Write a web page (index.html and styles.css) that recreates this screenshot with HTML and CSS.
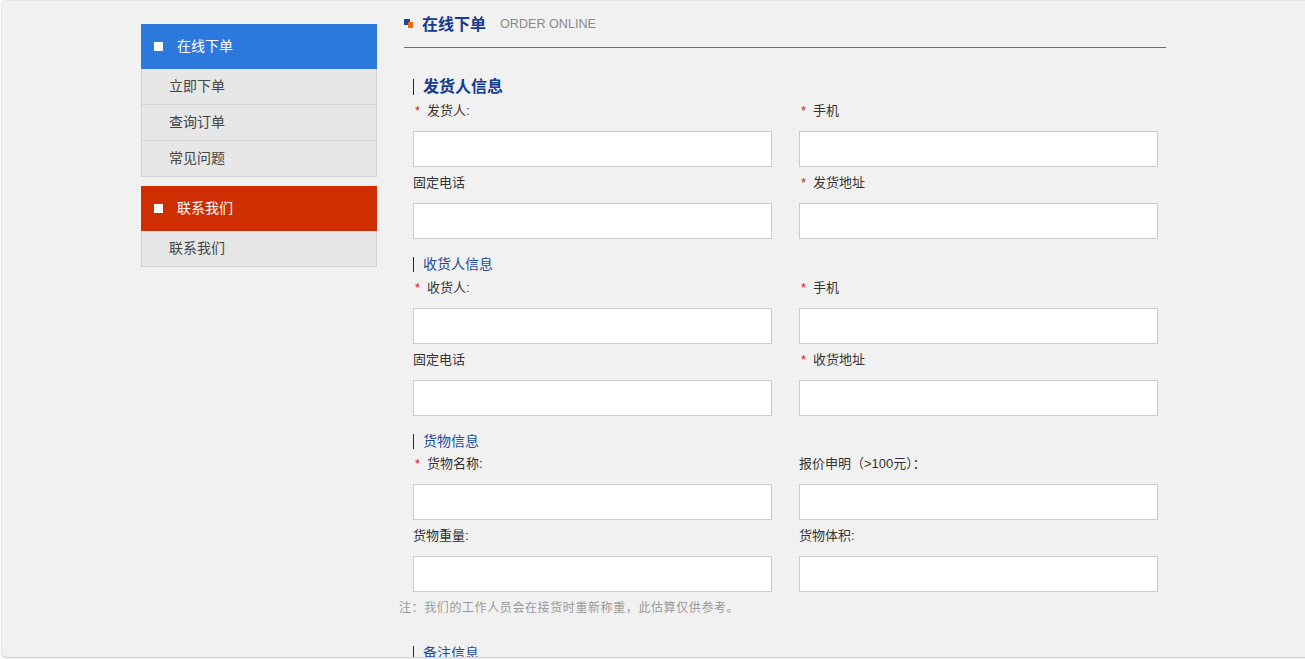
FILE: index.html
```html
<!DOCTYPE html>
<html lang="zh-CN">
<head>
<meta charset="utf-8">
<title>在线下单</title>
<link rel="stylesheet" href="styles.css">
</head>
<body>
<div class="frame">
  <div class="layout">
    <aside class="sidebar">
      <div class="side-block">
        <div class="side-head blue"><span class="sq"></span>在线下单</div>
        <ul class="side-list">
          <li>立即下单</li>
          <li>查询订单</li>
          <li>常见问题</li>
        </ul>
      </div>
      <div class="side-block">
        <div class="side-head red"><span class="sq"></span>联系我们</div>
        <ul class="side-list">
          <li>联系我们</li>
        </ul>
      </div>
    </aside>
    <main class="content">
      <div class="page-head">
        <span class="logo-sq"><i class="b"></i><i class="o"></i></span>
        <h1 class="page-title">在线下单</h1>
        <span class="page-sub">ORDER ONLINE</span>
      </div>
      <form class="form">
        <h2 class="sec-title big">发货人信息</h2>
        <div class="grid">
          <div class="field"><label><span class="req">*</span>发货人:</label><input type="text"></div>
          <div class="field"><label><span class="req">*</span>手机</label><input type="text"></div>
          <div class="field"><label>固定电话</label><input type="text"></div>
          <div class="field"><label><span class="req">*</span>发货地址</label><input type="text"></div>
        </div>
        <h2 class="sec-title">收货人信息</h2>
        <div class="grid">
          <div class="field"><label><span class="req">*</span>收货人:</label><input type="text"></div>
          <div class="field"><label><span class="req">*</span>手机</label><input type="text"></div>
          <div class="field"><label>固定电话</label><input type="text"></div>
          <div class="field"><label><span class="req">*</span>收货地址</label><input type="text"></div>
        </div>
        <h2 class="sec-title">货物信息</h2>
        <div class="grid tight">
          <div class="field"><label><span class="req">*</span>货物名称:</label><input type="text"></div>
          <div class="field"><label>报价申明（&gt;100元）：</label><input type="text"></div>
          <div class="field"><label>货物重量:</label><input type="text"></div>
          <div class="field"><label>货物体积:</label><input type="text"></div>
        </div>
        <p class="note">注：我们的工作人员会在接货时重新称重，此估算仅供参考。</p>
        <h2 class="sec-title last">备注信息</h2>
      </form>
    </main>
  </div>
</div>
</body>
</html>
```
FILE: styles.css
```css
* { box-sizing: border-box; }
html, body { margin: 0; padding: 0; }
body {
  background: #fbfbfb;
  width: 1305px;
  height: 659px;
  overflow: hidden;
  font-family: "Liberation Sans", Arial, "Noto Sans CJK SC", sans-serif;
  color: #333;
}
.frame {
  margin-left: 1px;
  width: 1330px;
  height: 658px;
  background: #f1f1f1;
  border: 1px solid #e4e4e4;
  border-bottom-color: #d4d4d4;
  border-radius: 6px;
  box-shadow: 0 1px 1px rgba(0,0,0,0.06);
  overflow: hidden;
}
.layout {
  display: flex;
  padding-left: 139px;
  gap: 27px;
}
.sidebar {
  width: 236px;
  padding-top: 23px;
  display: flex;
  flex-direction: column;
  gap: 9px;
}
.side-head {
  height: 45px;
  display: flex;
  align-items: center;
  padding-left: 13px;
  padding-bottom: 3px;
  color: #fff;
  font-size: 14px;
}
.side-head.blue { background: #2c79dd; }
.side-head.red { background: #cf2e02; }
.side-head .sq {
  width: 9px;
  height: 9px;
  background: #fff;
  margin-right: 14px;
  margin-top: 3px;
}
.side-list {
  list-style: none;
  margin: 0;
  padding: 0;
  border: 1px solid #d4d4d4;
  border-top: 0;
  background: #e7e7e7;
}
.side-list li {
  height: 36px;
  line-height: 35px;
  padding-left: 27px;
  font-size: 14px;
  color: #444;
  border-bottom: 1px solid #d4d4d4;
}
.side-list li:last-child { border-bottom: 0; height: 35px; }
.content {
  width: 762px;
}
.page-head {
  height: 47px;
  padding-bottom: 3px;
  border-bottom: 1px solid #2a7fc2;
  display: flex;
  align-items: center;
}
.logo-sq {
  position: relative;
  width: 10px;
  height: 10px;
  margin-right: 8px;
  margin-top: 3px;
}
.logo-sq i { position: absolute; display: block; }
.logo-sq .b { left: 0; top: 0; width: 6px; height: 6px; background: #1b46a0; }
.logo-sq .o { left: 4px; top: 3px; width: 5px; height: 6px; background: #f06a00; }
.page-title {
  margin: 0 14px 0 0;
  font-size: 16px;
  font-weight: bold;
  color: #163b8f;
}
.page-sub {
  font-size: 12.6px;
  color: #8a8a8a;
  margin-top: 3px;
}
.form {
  padding-left: 9px;
}
.sec-title {
  margin: 18px 0 0 0;
  border-left: 1px solid #1e2b55;
  padding-left: 9px;
  font-size: 14px;
  font-weight: normal;
  line-height: 15px;
  color: #1f4aa0;
}
.sec-title.big {
  margin-top: 31px;
  font-size: 16px;
  font-weight: bold;
  line-height: 16px;
  color: #163b8f;
}
.grid {
  margin-top: 6px;
  display: grid;
  grid-template-columns: 359px 359px;
  column-gap: 27px;
  row-gap: 6px;
}
.grid.tight { margin-top: 5px; }
.field { display: flex; flex-direction: column; }
.field label {
  height: 20px;
  line-height: 20px;
  font-size: 13px;
  color: #333;
  margin-bottom: 10px;
}
.req {
  color: #e0181e;
  margin: 0 7px 0 2px;
}
.field input {
  height: 36px;
  border: 1px solid #cbcbcb;
  background: #fff;
  margin: 0;
  padding: 0 8px;
  font-size: 13px;
  outline: none;
}
.note {
  margin: 6px 0 0 -14px;
  font-size: 12px;
  letter-spacing: 0.6px;
  line-height: 20px;
  color: #999;
}
.sec-title.last { margin-top: 28px; }
```
